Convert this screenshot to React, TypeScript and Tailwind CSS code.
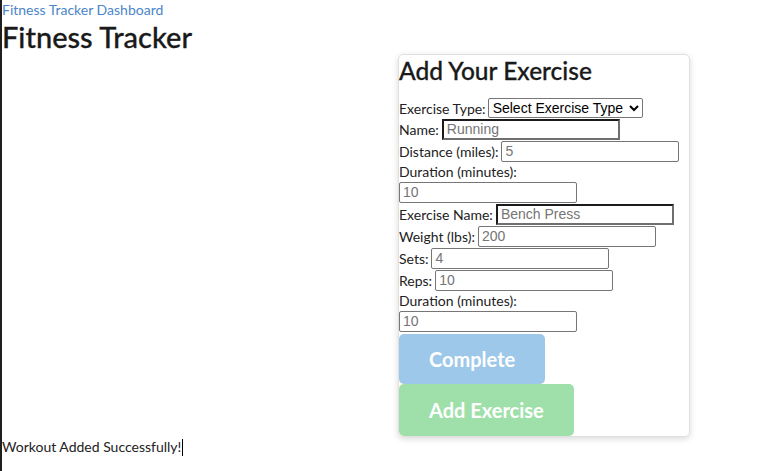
import { useState } from "react";

const inputBase =
  "h-[21px] w-[178px] px-[3px] font-['Liberation_Sans',Arial,sans-serif] text-[14px] text-[#222] placeholder:text-[#757575] bg-white outline-none";
const plain = "border border-[#767676] rounded-[2px]";
const focused =
  "border-2 border-t-[#1b1b1b] border-l-[#1b1b1b] border-b-[#6f6f6f] border-r-[#6f6f6f]";

function Row({ label, children }: { label: string; children: React.ReactNode }) {
  return (
    <div className="flex h-[22px] items-center gap-[3px]">
      <span>{label}</span>
      {children}
    </div>
  );
}

export default function App() {
  const [type, setType] = useState("");

  return (
    <div className="min-h-[471px] border-l-2 border-[#1f1f1f] bg-white font-['Lato',sans-serif] text-[14px] text-[#222]">
      <a href="#" className="block h-[20px] leading-[20px] text-[#4a86c8]">
        Fitness Tracker Dashboard
      </a>
      <h1 className="h-[34px] text-[29px] font-medium leading-[34px] text-[#1a1a1a] [-webkit-text-stroke:0.3px_#1a1a1a]">
        Fitness Tracker
      </h1>

      <div className="flex pl-[396px]">
        <div className="w-[292px] rounded-[5px] border border-[#e0e0e0] shadow-[0_2px_6px_rgba(0,0,0,0.15)]">
          <h2 className="h-[43px] pt-[1px] text-[24.5px] font-medium leading-[30px] text-[#1a1a1a] [-webkit-text-stroke:0.3px_#1a1a1a]">
            Add Your Exercise
          </h2>

          <div className="flex h-[20px] items-center gap-[2px]">
            <span>Exercise Type:</span>
            <select
              value={type}
              onChange={(e) => setType(e.target.value)}
              className="h-[20px] w-[155px] rounded-[2px] border border-[#767676] bg-white font-['Liberation_Sans',Arial,sans-serif] text-[14px] text-black"
            >
              <option value="">Select Exercise Type</option>
              <option value="cardio">Cardio</option>
              <option value="strength">Strength</option>
            </select>
          </div>
          <Row label="Name:">
            <input className={`${inputBase} ${focused}`} placeholder="Running" />
          </Row>
          <Row label="Distance (miles):">
            <input className={`${inputBase} ${plain}`} placeholder="5" />
          </Row>
          <div className="h-[19px] leading-[20px]">Duration (minutes):</div>
          <div className="flex h-[22px] items-center">
            <input className={`${inputBase} ${plain}`} placeholder="10" />
          </div>
          <Row label="Exercise Name:">
            <input className={`${inputBase} ${focused}`} placeholder="Bench Press" />
          </Row>
          <Row label="Weight (lbs):">
            <input className={`${inputBase} ${plain}`} placeholder="200" />
          </Row>
          <Row label="Sets:">
            <input className={`${inputBase} ${plain}`} placeholder="4" />
          </Row>
          <Row label="Reps:">
            <input className={`${inputBase} ${plain}`} placeholder="10" />
          </Row>
          <div className="h-[19px] leading-[20px]">Duration (minutes):</div>
          <div className="flex h-[22px] items-center">
            <input className={`${inputBase} ${plain}`} placeholder="10" />
          </div>

          <div className="flex flex-col items-start pt-[2px]">
            <button className="h-[50px] rounded-[5px] bg-[#9dc8ea] px-[30px] text-[20px] font-bold text-white">
              Complete
            </button>
            <button className="h-[52px] rounded-[5px] bg-[#9fe0aa] px-[30px] text-[20px] font-bold text-white">
              Add Exercise
            </button>
          </div>
        </div>
      </div>

      <p className="flex h-[20px] items-center leading-[20px]">
        Workout Added Successfully!
        <span className="ml-[1px] inline-block h-[17px] w-[1px] bg-black" />
      </p>
    </div>
  );
}
